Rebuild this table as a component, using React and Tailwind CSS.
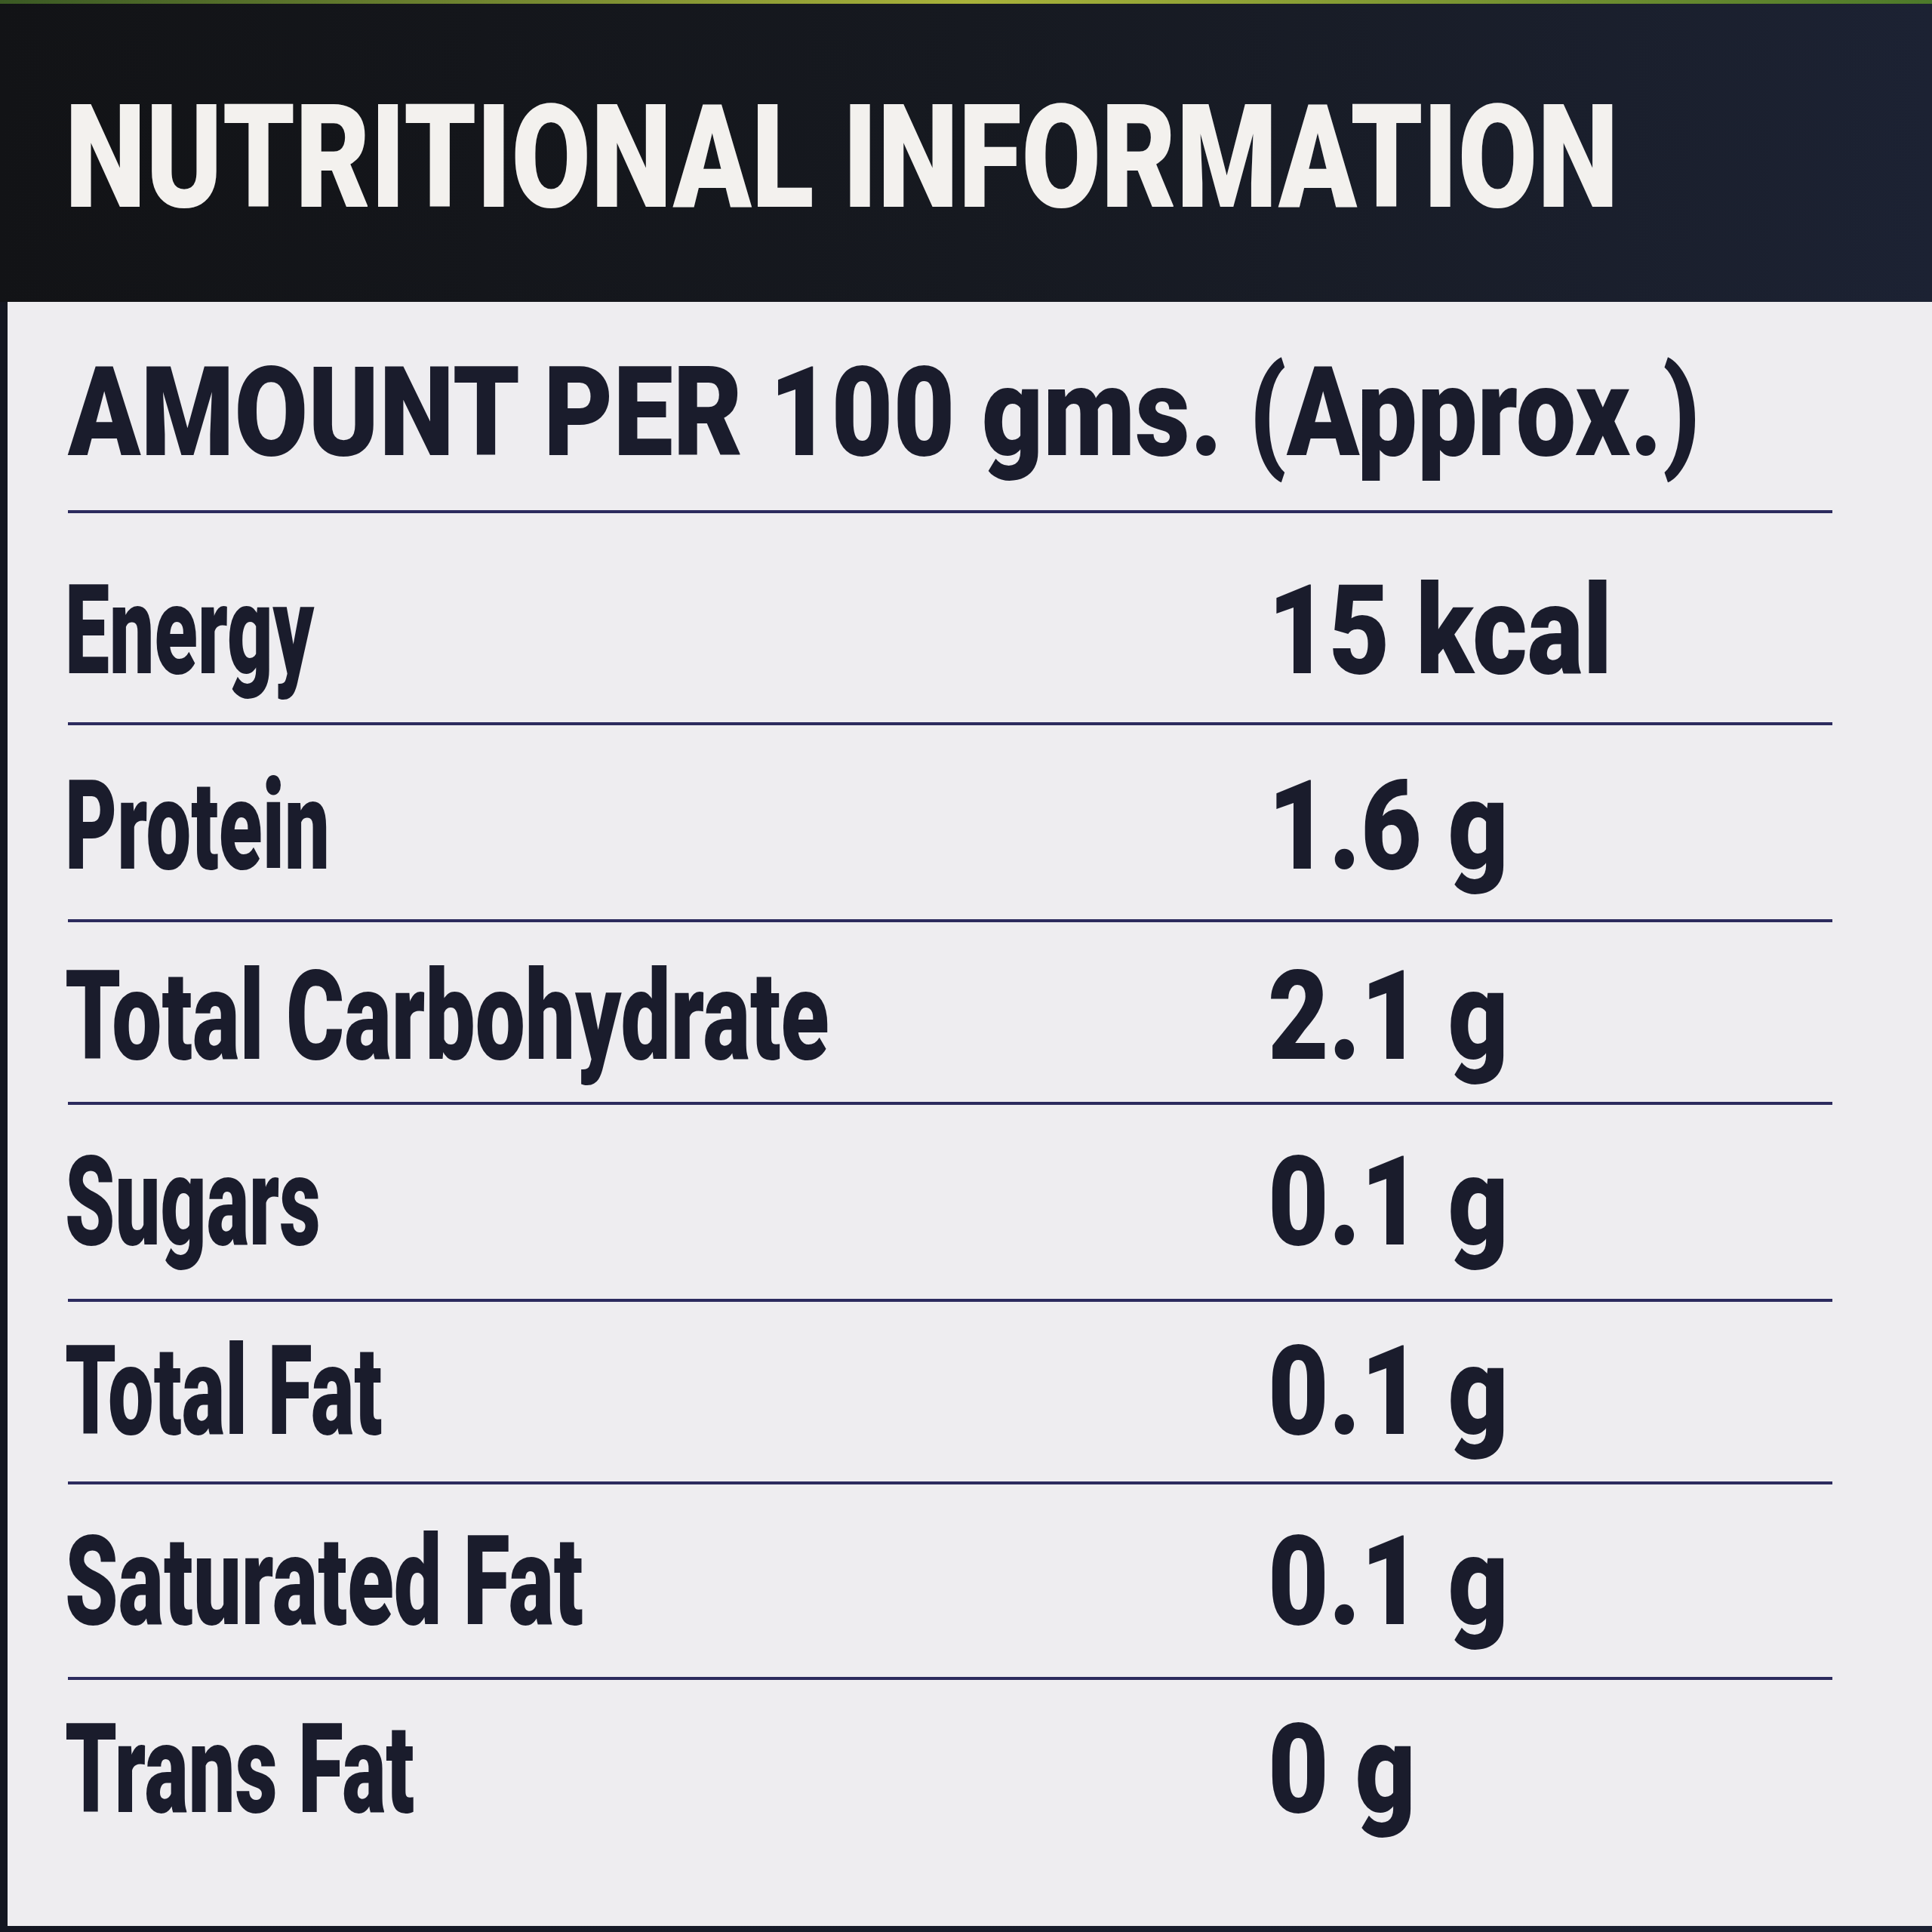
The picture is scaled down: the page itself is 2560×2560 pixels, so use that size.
import React from 'react';

const rows = [
  { label: 'Energy', value: '15 kcal', h: 'h-[277px]', pt: 'pt-[73px]', sx: 'scale-x-[0.635]' },
  { label: 'Protein', value: '1.6 g', h: 'h-[257px]', pt: 'pt-[51px]', sx: 'scale-x-[0.64]' },
  { label: 'Total Carbohydrate', value: '2.1 g', h: 'h-[238px]', pt: 'pt-[42px]', sx: 'scale-x-[0.709]' },
  { label: 'Sugars', value: '0.1 g', h: 'h-[257px]', pt: 'pt-[46px]', sx: 'scale-x-[0.64]' },
  { label: 'Total Fat', value: '0.1 g', h: 'h-[238px]', pt: 'pt-[36px]', sx: 'scale-x-[0.65]' },
  { label: 'Saturated Fat', value: '0.1 g', h: 'h-[255px]', pt: 'pt-[46px]', sx: 'scale-x-[0.682]' },
  { label: 'Trans Fat', value: '0 g', h: 'flex-1', pt: 'pt-[36px]', sx: 'scale-x-[0.66]' },
];

const Rule = () => <div className="ml-[80px] h-[4px] w-[2338px] bg-[#2c2b5e]" />;

const App = () => {
  return (
    <div className="w-[2560px] h-[2560px] flex flex-col bg-[#1b2030] font-['Roboto',sans-serif] font-black">
      {/* top edge of photo */}
      <div className="h-[5px] bg-gradient-to-r from-[#3b5a24] via-[#a9b23a] to-[#4d7a2a]" />

      {/* Header band */}
      <div className="h-[395px] pt-[109px] pl-[86px] bg-gradient-to-r from-[#121316] via-[#161920] to-[#1c2233]">
        <h1 className="inline-block origin-left scale-x-[0.8] text-[191px] leading-none text-[#f3f1ee] whitespace-nowrap">
          NUTRITIONAL INFORMATION
        </h1>
      </div>

      {/* White panel */}
      <div className="flex-1 flex pl-[10px] pr-[20px] pb-[8px] bg-gradient-to-r from-[#141722] to-[#1c2233]">
        <div className="flex-1 flex flex-col bg-[#eeedf0] text-[#1a1c2c]">
          <div className="h-[276px] pt-[64px] pl-[80px]">
            <div className="inline-block origin-left scale-x-[0.853] text-[166px] leading-none whitespace-nowrap">
              AMOUNT PER 100 gms. (Approx.)
            </div>
          </div>
          <Rule />

          {rows.map((r, i) => (
            <React.Fragment key={r.label}>
              <div className={`${r.h} ${r.pt} flex items-start`}>
                <div className="w-[1670px] pl-[76px]">
                  <span className={`inline-block origin-left ${r.sx} text-[166px] leading-none whitespace-nowrap`}>
                    {r.label}
                  </span>
                </div>
                <span className="inline-block origin-left scale-x-[0.84] text-[166px] leading-none whitespace-nowrap">
                  {r.value}
                </span>
              </div>
              {i < rows.length - 1 && <Rule />}
            </React.Fragment>
          ))}
        </div>
      </div>
    </div>
  );
};

export default App;
